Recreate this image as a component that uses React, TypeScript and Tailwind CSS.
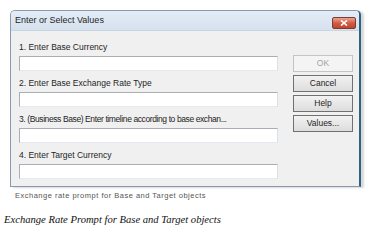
const fields = [
  { text: '1. Enter Base Currency', tight: false },
  { text: '2. Enter Base Exchange Rate Type', tight: false },
  { text: '3. (Business Base) Enter timeline according to base exchan...', tight: true },
  { text: '4. Enter Target Currency', tight: false },
]

const buttons = [
  { label: 'OK', disabled: true },
  { label: 'Cancel', disabled: false },
  { label: 'Help', disabled: false },
  { label: 'Values...', disabled: false },
]

export default function App() {
  return (
    <div className="w-[388px] h-[250px] bg-white overflow-hidden" style={{ fontFamily: '"Liberation Sans", Arial, sans-serif' }}>
      <div className="pt-[10px] pl-[10px]">
        {/* Dialog window */}
        <div className="w-[351px] h-[177px] rounded-t-[5px] border border-[#8a9aad] border-r-2 border-r-[#2a6384] bg-[#f0f0f0] shadow-[3px_1px_2px_rgba(0,0,0,0.15)] flex flex-col">
          {/* Title bar */}
          <div className="h-[20px] flex items-center justify-between pl-[4px] pr-[3px] rounded-t-[4px] bg-gradient-to-b from-[#e4edf6] to-[#d5e1ee] border-b border-[#c9d5e2]">
            <span className="text-[9px] text-[#1e1e1e]">Enter or Select Values</span>
            <div className="w-[24px] h-[12px] mt-[4px] rounded-[2px] border border-[#7a3b30] bg-gradient-to-b from-[#e9a593] via-[#d15c45] to-[#c0452e] flex items-center justify-center">
              <svg width="8" height="6" viewBox="0 0 8 6">
                <path d="M1 0.5 L7 5.5 M7 0.5 L1 5.5" stroke="white" strokeWidth="1.6" />
              </svg>
            </div>
          </div>
          {/* Body */}
          <div className="flex flex-1 pl-[8px]">
            <div className="w-[259px] pt-[10px] flex flex-col gap-[6px]">
              {fields.map((f) => (
                <div key={f.text} className="flex flex-col">
                  <div className={f.tight ? 'h-[12px] leading-[12px] text-[8.5px] tracking-[-0.4px] text-[#1e1e1e] whitespace-nowrap' : 'h-[12px] leading-[12px] text-[8.5px] text-[#1e1e1e] whitespace-nowrap'}>
                    {f.text}
                  </div>
                  <div className="mt-[3px] h-[15px] bg-white border border-[#abadb3] border-b-[#e3e9ef] border-r-[#dbdfe6]" />
                </div>
              ))}
            </div>
            <div className="ml-[15px] pt-[24px] flex flex-col gap-[3px]">
              {buttons.map((b) => (
                <div
                  key={b.label}
                  className={
                    b.disabled
                      ? 'w-[60px] h-[17px] flex items-center justify-center text-[8.5px] text-[#a3a3a3] bg-[#f4f4f4] border border-[#c2c5c8]'
                      : 'w-[60px] h-[17px] flex items-center justify-center text-[8.5px] text-[#1e1e1e] bg-gradient-to-b from-[#f2f2f2] to-[#dddddd] border border-[#707070]'
                  }
                >
                  {b.label}
                </div>
              ))}
            </div>
          </div>
        </div>
      </div>
      <div className="pl-[15px] mt-[4px] text-[7.5px] leading-[10px] text-[#555] tracking-[0.5px]">
        Exchange rate prompt for Base and Target objects
      </div>
      <div className="pl-[4px] mt-[12px] text-[10.6px] leading-[14px] italic text-[#111]" style={{ fontFamily: '"Liberation Serif", "Times New Roman", serif' }}>
        Exchange Rate Prompt for Base and Target objects
      </div>
    </div>
  )
}
